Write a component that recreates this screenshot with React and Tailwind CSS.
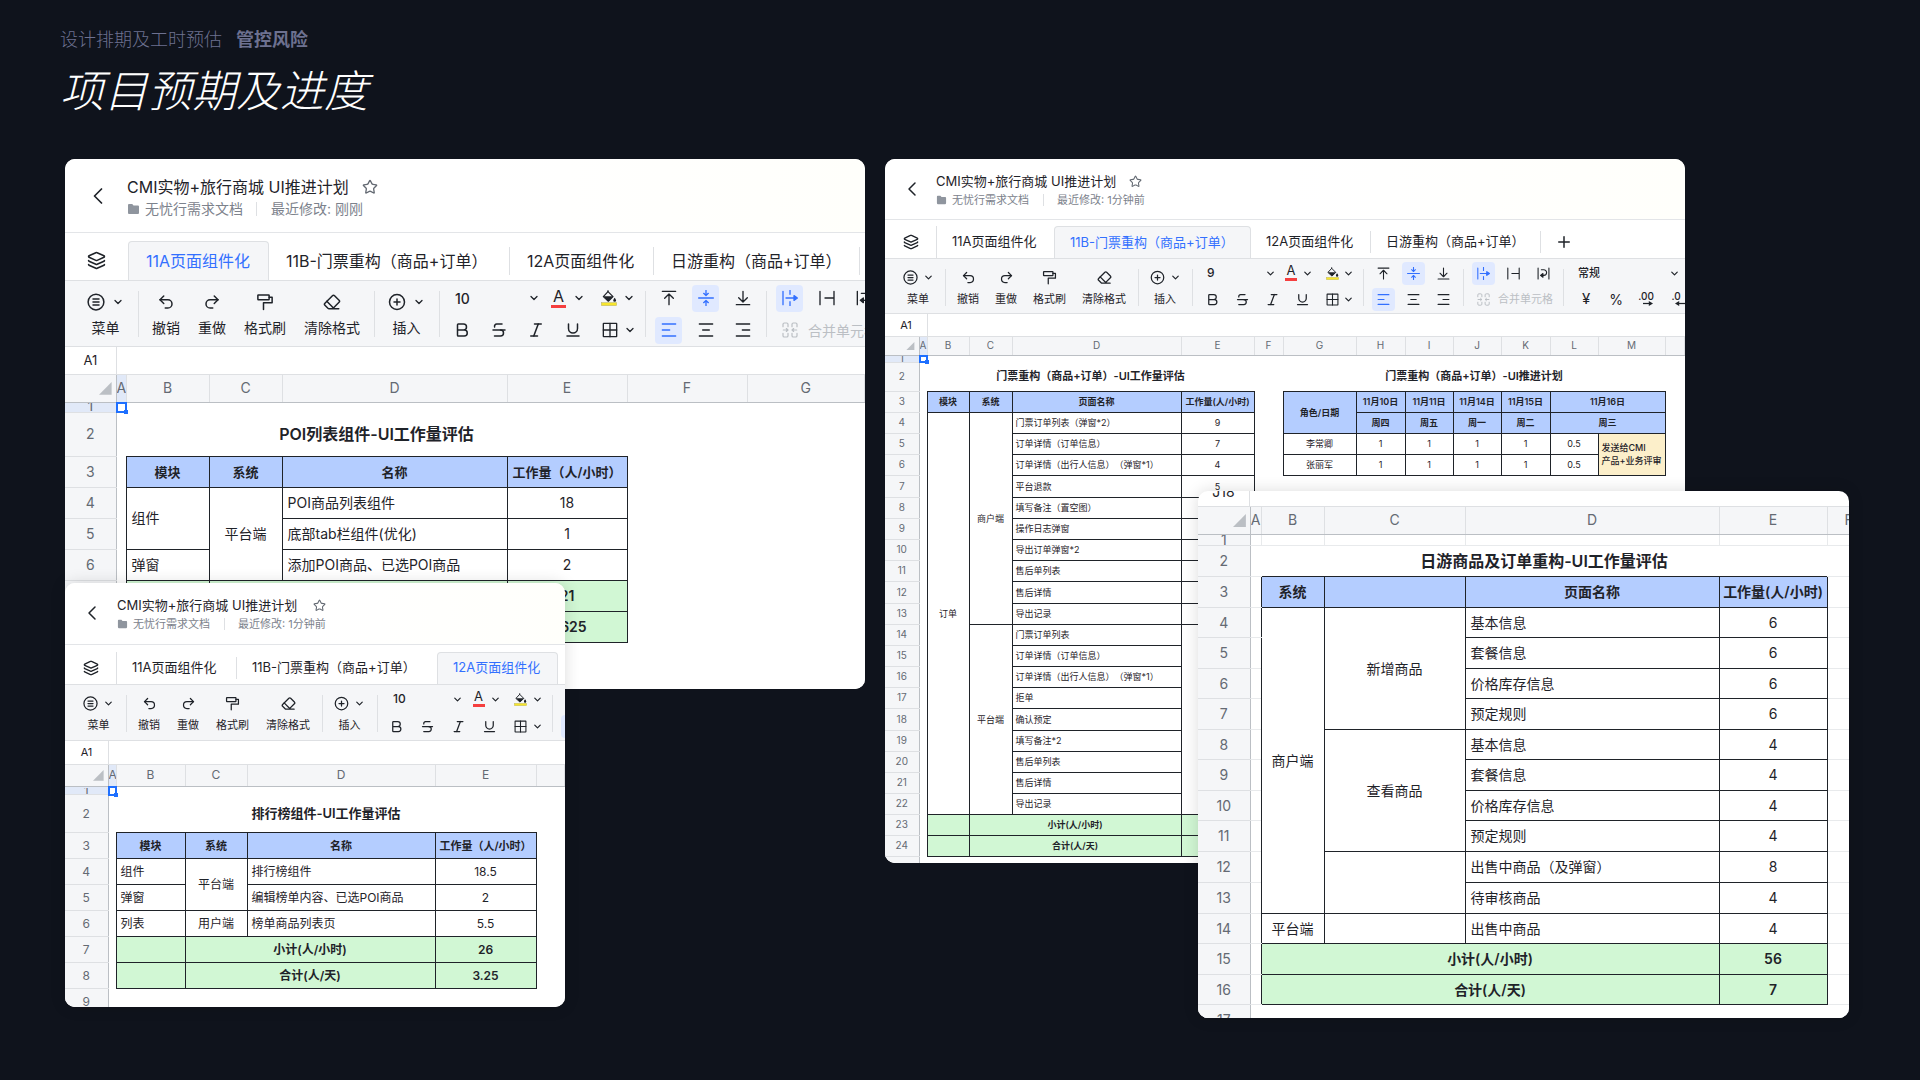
import React from "react";
import {
  Bold,
  ChevronDown,
  ChevronLeft,
  CirclePlus,
  Eraser,
  Italic,
  Layers,
  Plus,
  Redo2,
  Star,
  Strikethrough,
  Underline,
  Undo2,
} from "lucide-react";

/* ---------- icons ---------- */

function Svg({ className, children, width = 2 }) {
  return (
    <svg
      viewBox="0 0 24 24"
      className={className}
      fill="none"
      stroke="currentColor"
      strokeWidth={width}
      strokeLinecap="round"
      strokeLinejoin="round"
      aria-hidden="true"
    >
      {children}
    </svg>
  );
}

const MenuIcon = ({ className }) => (
  <Svg className={className}>
    <circle cx="12" cy="12" r="10.5" />
    <path d="M8 8h8M8 12h8M8 16h8" />
  </Svg>
);
const RollerIcon = ({ className }) => (
  <Svg className={className}>
    <rect x="2.5" y="2.5" width="15" height="6.5" rx="0.6" />
    <path d="M17.5 5.5h4v7.5H10v9" />
  </Svg>
);
const FolderIcon = ({ className }) => (
  <svg viewBox="0 0 24 24" className={className} fill="currentColor" aria-hidden="true">
    <path d="M1 4a2 2 0 0 1 2-2h6.500l2.500 3H21a2 2 0 0 1 2 2v13a2 2 0 0 1-2 2H3a2 2 0 0 1-2-2z" />
  </svg>
);
const BucketIcon = ({ className }) => (
  <svg viewBox="0 0 24 24" className={className} aria-hidden="true">
    <path d="M10.500 0.500v3" stroke="#1f2329" strokeWidth="1.800" fill="none" />
    <path d="M10.500 2.500 18 10l-7 6.800L3.500 10z" fill="none" stroke="#1f2329" strokeWidth="1.800" strokeLinejoin="round" />
    <path d="M3.500 9.500h15l-7.500 7.300z" fill="#1f2329" />
    <path d="M20.500 11.500s2.200 2.700 2.200 4.100a2.200 2.200 0 0 1-4.400 0c0-1.400 2.200-4.100 2.200-4.100z" fill="#1f2329" />
    <rect x="0.500" y="19" width="23" height="4.500" fill="#f7e52b" stroke="#b9b46a" strokeWidth="0.800" />
  </svg>
);
const BordersIcon = ({ className }) => (
  <Svg className={className}>
    <rect x="2" y="2" width="20" height="20" rx="0.500" />
    <path d="M12 2v20M2 12h20" />
  </Svg>
);
const TopIcon = ({ className }) => (
  <Svg className={className}>
    <path d="M2 2h20M12 22V7M5.500 12.500 12 6l6.500 6.500" />
  </Svg>
);
const MiddleIcon = ({ className }) => (
  <Svg className={className}>
    <path d="M1 12h22M12 0.500v7M8.500 5 12 8.300 15.500 5M12 23.500v-7M8.500 19l3.500-3.300 3.500 3.300" />
  </Svg>
);
const BottomIcon = ({ className }) => (
  <Svg className={className}>
    <path d="M2 22h20M12 2v15M5.500 11.500 12 18l6.500-6.500" />
  </Svg>
);
const LeftIcon = ({ className }) => (
  <Svg className={className}>
    <path d="M2 3h20M2 12h11M2 21h20" />
  </Svg>
);
const CenterIcon = ({ className }) => (
  <Svg className={className}>
    <path d="M2 3h20M7 12h10M2 21h20" />
  </Svg>
);
const RightIcon = ({ className }) => (
  <Svg className={className}>
    <path d="M2 3h20M11 12h11M2 21h20" />
  </Svg>
);
const OverflowIcon = ({ className }) => (
  <Svg className={className}>
    <path d="M1.500 2v20M12 0.500v6M12 17.500v6M6 12h13" />
    <path d="m18 8.500 5 3.500-5 3.500z" fill="currentColor" />
  </Svg>
);
const ClipIcon = ({ className }) => (
  <Svg className={className}>
    <path d="M1.500 2v20M22.500 2v20M9 12h13" />
  </Svg>
);
const WrapIcon = ({ className }) => (
  <Svg className={className}>
    <path d="M2 2v20M22 2v20M8 5h4.500a5 5 0 0 1 0 10.500H10" />
    <path d="m11 12-4.500 3.500L11 19z" fill="currentColor" />
  </Svg>
);
const MergeIcon = ({ className }) => (
  <Svg className={className} width={1.800}>
    <path d="M1.500 7V3.500a2 2 0 0 1 2-2H7a2 2 0 0 1 2 2V7M1.500 17v3.500a2 2 0 0 0 2 2H7a2 2 0 0 0 2-2V17" />
    <path d="M15 7V3.500a2 2 0 0 1 2-2h3.500a2 2 0 0 1 2 2V7M15 17v3.500a2 2 0 0 0 2 2h3.500a2 2 0 0 0 2-2V17" />
    <path d="M2 12h6.500M6.500 9.800 9 12l-2.500 2.200M22 12h-6.500M17.500 9.800 15 12l2.500 2.200" />
  </Svg>
);
const ArrowRight = ({ className }) => (
  <svg viewBox="0 0 12 6" className={className} aria-hidden="true">
    <path d="M0 3h8" stroke="currentColor" strokeWidth="1.500" />
    <path d="m7 0 5 3-5 3z" fill="currentColor" />
  </svg>
);
const ArrowLeft = ({ className }) => (
  <svg viewBox="0 0 12 6" className={className} aria-hidden="true">
    <path d="M4 3h8" stroke="currentColor" strokeWidth="1.500" />
    <path d="M5 0 0 3l5 3z" fill="currentColor" />
  </svg>
);

/* ---------- sizes of the three editor chromes ---------- */

const LARGE = {
  header: "h-[74px]",
  back: "w-[62px] pl-1",
  backIcon: "size-[28px]",
  title: "text-[16px] leading-6 gap-[13px]",
  star: "size-4",
  sub: "text-[14px] leading-5",
  folder: "w-[13px] h-3 mr-[5px]",
  subRule: "h-[14px] ml-[13px] mr-[14px]",
  tabs: "h-12",
  lead: "w-[63px]",
  layers: "size-[19px]",
  tabText: "text-[16px] pl-[17px]",
  tabHeight: "h-[39px]",
  tabRule: "h-7",
  bar: "h-[66px]",
  rule: "h-[46px] mt-[10px]",
  menu: "w-[73px] pl-2",
  insert: "w-[65px]",
  group: "gap-[18px] px-[14px]",
  item: "pt-3 gap-[7px] text-[14px] leading-5",
  icon: "size-[18px]",
  chev: "size-3",
  itemChev: "gap-[7px]",
  stack: "pt-px",
  row: "h-8",
  fontPad: "pl-1 pr-[9px]",
  cell: "w-[37px]",
  select: "w-[97px] pl-3 text-[14px]",
  selectChev: "right-0",
  letter: "w-[50px]",
  a: "text-[16px] leading-[14px] w-[15px]",
  aBar: "h-[3px]",
  alignPad: "px-[5px]",
  hi: "size-[27px]",
  alignIcon: "size-4",
  mergeText: "text-[14px]",
  name: "h-7 text-[13px]",
  nameBox: "w-[52px]",
};

const SMALL = {
  header: "h-[61px]",
  back: "w-[51px] pl-[2px]",
  backIcon: "size-[24px]",
  title: "text-[13px] leading-5 gap-[13px]",
  star: "size-[13px]",
  sub: "text-[11px] leading-[18px]",
  folder: "w-[11px] h-[10px] mr-[5px]",
  subRule: "h-3 ml-[14px] mr-[13px]",
  tabs: "h-[39px]",
  lead: "w-[51px]",
  layers: "size-4",
  tabText: "text-[13px] pl-[15px]",
  tabHeight: "h-8",
  tabRule: "h-[22px]",
  bar: "h-[55px]",
  rule: "h-[37px] mt-[10px]",
  menu: "w-[60px] pl-[6px]",
  insert: "w-[54px]",
  group: "gap-4 px-3",
  item: "pt-[11px] gap-[6px] text-[11px] leading-4",
  icon: "size-[15px]",
  chev: "size-[11px]",
  itemChev: "gap-[5px]",
  stack: "pt-px",
  row: "h-[26px]",
  fontPad: "pl-[5px] pr-[9px]",
  cell: "w-[30px]",
  select: "w-[79px] pl-[10px] text-[12px]",
  selectChev: "right-0",
  letter: "w-[41px]",
  a: "text-[13px] leading-[11px] w-3",
  aBar: "h-[3px]",
  alignPad: "px-[5px]",
  hi: "size-[23px]",
  alignIcon: "size-[13px]",
  mergeText: "text-[11px]",
  name: "h-[23px] text-[11px]",
  nameBox: "w-[43px]",
};

const MEDIUM = {
  ...SMALL,
  header: "h-[62px]",
  back: "w-[52px] pl-[2px]",
  title: "text-[13px] leading-5 gap-4",
  tabs: "h-10",
  bar: "h-[56px]",
  menu: "w-[61px] pl-[6px]",
  insert: "w-[55px]",
  group: "gap-[17px] px-3",
  row: "h-[27px]",
  fontPad: "pl-1 pr-[9px]",
  cell: "w-[31px]",
  select: "w-[82px] pl-3 text-[12px]",
  letter: "w-[42px]",
  name: "h-6 text-[11px]",
  nameBox: "w-[44px]",
};

/* ---------- editor chrome ---------- */

function DocHeader({ s, edited }) {
  return (
    <header className={`flex items-center border-b border-[#e3e5e8] bg-linear-to-r from-white via-white to-[#fffffb] ${s.header}`}>
      <button aria-label="返回" className={`flex shrink-0 justify-center ${s.back}`}>
        <ChevronLeft className={s.backIcon} strokeWidth={1.5} />
      </button>
      <div className="pt-[2px]">
        <div className={`flex items-center whitespace-nowrap ${s.title}`}>
          <h2>CMI实物+旅行商城 UI推进计划</h2>
          <button aria-label="收藏" className="text-[#646a73]">
            <Star className={s.star} strokeWidth={2} />
          </button>
        </div>
        <div className={`flex items-center whitespace-nowrap text-[#7c828c] ${s.sub}`}>
          <FolderIcon className={`text-[#8f959e] ${s.folder}`} />
          <a href="#folder">无忧行需求文档</a>
          <span className={`w-px bg-[#dee0e3] ${s.subRule}`} />
          <span>最近修改: {edited}</span>
        </div>
      </div>
    </header>
  );
}

function Tabs({ s, tabs, add }) {
  const active = tabs.findIndex((t) => t.active);
  return (
    <div className={`flex items-end border-b border-[#dee0e3] bg-white ${s.tabs}`}>
      <button aria-label="工作表列表" className={`flex shrink-0 items-center justify-center ${s.lead} ${s.tabHeight}`}>
        <Layers className={s.layers} strokeWidth={2} />
      </button>
      <div role="tablist" className={`flex ${active === 0 ? "" : "border-l border-[#dee0e3]"}`}>
        {tabs.map((t, i) => (
          <button
            key={t.label}
            role="tab"
            aria-selected={!!t.active}
            className={`flex shrink-0 items-center justify-between whitespace-nowrap ${s.tabHeight} ${s.tabText} ${t.width} ${
              t.active ? "-mb-px rounded-t-[4px] border border-b-0 border-[#dee0e3] bg-[#f5f6f8] text-[#3370ff]" : ""
            }`}
          >
            {t.label}
            {!t.active && i + 1 !== active && <span className={`w-px bg-[#dee0e3] ${s.tabRule}`} />}
          </button>
        ))}
      </div>
      {add && (
        <button aria-label="新建工作表" className={`flex w-[46px] shrink-0 items-center justify-center ${s.tabHeight}`}>
          <Plus className="size-[18px]" strokeWidth={2} />
        </button>
      )}
    </div>
  );
}

const Rule = ({ s }) => <span className={`-mr-px w-px shrink-0 bg-[#dee0e3] ${s.rule}`} />;
const Chev = ({ s, className = "" }) => <ChevronDown className={`shrink-0 ${s.chev} ${className}`} strokeWidth={2.6} />;

function Item({ s, icon: Icon, label, stroke }) {
  return (
    <button className={`flex shrink-0 flex-col items-center whitespace-nowrap ${s.item}`}>
      <Icon className={s.icon} strokeWidth={stroke} />
      {label}
    </button>
  );
}

function DropItem({ s, icon: Icon, label, width }) {
  return (
    <button className={`flex shrink-0 flex-col items-center whitespace-nowrap ${s.item} ${width}`}>
      <span className={`flex items-center ${s.itemChev}`}>
        <Icon className={s.icon} strokeWidth={2} />
        <Chev s={s} />
      </span>
      {label}
    </button>
  );
}

function IconCell({ s, icon: Icon, label, on, size }) {
  return (
    <span className={`flex shrink-0 justify-center ${s.cell}`}>
      <button
        aria-label={label}
        aria-pressed={!!on}
        className={`flex items-center justify-center rounded-[4px] ${s.hi} ${on ? "bg-[#e0e9ff] text-[#3370ff]" : ""}`}
      >
        <Icon className={size || s.alignIcon} strokeWidth={2} />
      </button>
    </span>
  );
}

function Toolbar({ s, fontSize, numberFormat }) {
  return (
    <div role="toolbar" aria-label="格式" className={`flex overflow-hidden border-b border-[#dee0e3] bg-[#f5f6f8] ${s.bar}`}>
      <DropItem s={s} icon={MenuIcon} label="菜单" width={s.menu} />
      <Rule s={s} />
      <div className={`flex ${s.group}`}>
        <Item s={s} icon={Undo2} label="撤销" stroke={2} />
        <Item s={s} icon={Redo2} label="重做" stroke={2} />
        <Item s={s} icon={RollerIcon} label="格式刷" />
        <Item s={s} icon={Eraser} label="清除格式" stroke={2} />
      </div>
      <Rule s={s} />
      <DropItem s={s} icon={CirclePlus} label="插入" width={s.insert} />
      <Rule s={s} />
      <div className={`shrink-0 ${s.stack} ${s.fontPad}`}>
        <div className={`flex items-center ${s.row}`}>
          <span className="relative flex items-center">
            <select aria-label="字号" defaultValue={fontSize} className={`appearance-none bg-transparent font-medium ${s.select}`}>
              <option>{fontSize}</option>
            </select>
            <Chev s={s} className={`pointer-events-none absolute ${s.selectChev}`} />
          </span>
          <span className={`flex items-center ${s.letter}`}>
            <button aria-label="字体颜色" className={`flex shrink-0 justify-center ${s.cell}`}>
              <span className={`flex flex-col items-center gap-[2px] ${s.a}`}>
                A
                <span className={`w-full bg-[#f53f3f] ${s.aBar}`} />
              </span>
            </button>
            <Chev s={s} className="-ml-1" />
          </span>
          <IconCell s={s} icon={BucketIcon} label="填充颜色" />
          <Chev s={s} className="-ml-1" />
        </div>
        <div className={`flex items-center ${s.row}`}>
          <IconCell s={s} icon={Bold} label="加粗" size={s.icon} />
          <IconCell s={s} icon={Strikethrough} label="删除线" size={s.icon} />
          <IconCell s={s} icon={Italic} label="斜体" size={s.icon} />
          <IconCell s={s} icon={Underline} label="下划线" size={s.icon} />
          <IconCell s={s} icon={BordersIcon} label="边框" />
          <Chev s={s} className="-ml-1" />
        </div>
      </div>
      <Rule s={s} />
      <div className={`shrink-0 ${s.stack} ${s.alignPad}`}>
        <div className={`flex items-center ${s.row}`}>
          <IconCell s={s} icon={TopIcon} label="顶端对齐" />
          <IconCell s={s} icon={MiddleIcon} label="垂直居中" on />
          <IconCell s={s} icon={BottomIcon} label="底端对齐" />
        </div>
        <div className={`flex items-center ${s.row}`}>
          <IconCell s={s} icon={LeftIcon} label="左对齐" on />
          <IconCell s={s} icon={CenterIcon} label="水平居中" />
          <IconCell s={s} icon={RightIcon} label="右对齐" />
        </div>
      </div>
      <Rule s={s} />
      <div className={`shrink-0 ${s.stack} ${s.alignPad}`}>
        <div className={`flex items-center ${s.row}`}>
          <IconCell s={s} icon={OverflowIcon} label="溢出" on />
          <IconCell s={s} icon={ClipIcon} label="截断" />
          <IconCell s={s} icon={WrapIcon} label="自动换行" />
        </div>
        <button disabled className={`flex items-center whitespace-nowrap text-[#bbbfc4] ${s.row} ${s.mergeText}`}>
          <span className={`flex shrink-0 justify-center ${s.cell}`}>
            <MergeIcon className={s.alignIcon} />
          </span>
          合并单元格
        </button>
      </div>
      {numberFormat && (
        <>
          <Rule s={s} />
          <div className={`shrink-0 pl-2 ${s.stack}`}>
            <div className={`relative flex items-center ${s.row}`}>
              <select aria-label="数字格式" className="w-[112px] appearance-none bg-transparent pl-[7px] text-[11px] font-medium">
                <option>常规</option>
              </select>
              <Chev s={s} className="pointer-events-none absolute left-[98px]" />
            </div>
            <div className={`flex items-center ${s.row}`}>
              <button aria-label="货币" className={`text-[15px] ${s.cell}`}>¥</button>
              <button aria-label="百分比" className={`text-[14px] ${s.cell}`}>%</button>
              <button aria-label="增加小数位" className={`flex flex-col items-center text-[10px] leading-[9px] font-medium ${s.cell}`}>
                .00
                <ArrowRight className="ml-[3px] h-[5px] w-[10px]" />
              </button>
              <button aria-label="减少小数位" className={`flex flex-col items-center text-[10px] leading-[9px] font-medium ${s.cell}`}>
                .0
                <ArrowLeft className="ml-[8px] h-[5px] w-[10px]" />
              </button>
            </div>
          </div>
        </>
      )}
    </div>
  );
}

function NameBar({ s, value }) {
  return (
    <div className={`flex border-b border-[#dee0e3] bg-white ${s.name}`}>
      <input aria-label="名称框" defaultValue={value} className={`shrink-0 border-r border-[#dee0e3] text-center outline-none ${s.nameBox}`} />
      <input aria-label="编辑栏" className="min-w-0 flex-1 outline-none" />
    </div>
  );
}

/* ---------- sheet ---------- */

const KIND = {
  title: "font-semibold text-center",
  head: "border border-[#1f2329] bg-[#b4cdff] font-semibold text-center",
  left: "border border-[#1f2329] bg-white text-left",
  mid: "border border-[#1f2329] bg-white text-center",
  sum: "border border-[#1f2329] bg-[#d1f7d4] font-semibold text-center",
  note: "border border-[#1f2329] bg-[#fcefca] text-left font-medium",
  gap: "",
  grid: "border border-[#e8eaec]",
  side: "border-y border-[#e8eaec]",
};

function Sheet({ cols, letters, headHeight, rows, text, num, pad, titleText, headText = "", rowOne, selected }) {
  const extra = { left: pad, note: pad, title: titleText, head: headText };
  return (
    <table className={`w-full table-fixed border-collapse bg-white ${text}`}>
      <colgroup>
        {cols.map((c, i) => (
          <col key={i} className={c} />
        ))}
      </colgroup>
      <thead>
        <tr className={`bg-[#f5f6f8] text-[#646a73] ${headHeight} ${num}`}>
          <th className="border-r border-b border-[#bbbfc4] p-0">
            <svg viewBox="0 0 10 10" className="mr-1 ml-auto w-[25%]" aria-hidden="true">
              <path d="M10 0v10H0z" fill="#bbbfc4" />
            </svg>
          </th>
          {letters.map((l, i) => (
            <th
              key={i}
              scope="col"
              className={`overflow-hidden border-r border-b border-r-[#dee0e3] border-b-[#bbbfc4] p-0 font-normal ${selected && i === 0 ? "bg-[#e1e9f8]" : ""}`}
            >
              {l}
            </th>
          ))}
        </tr>
      </thead>
      <tbody>
        {rows.map((r, ri) => (
          <tr key={ri} className={r.h}>
            <th
              scope="row"
              className={`border-r border-b border-r-[#bbbfc4] border-b-[#dee0e3] p-0 font-normal text-[#646a73] ${num} ${
                selected && ri === 0 ? "bg-[#e1e9f8]" : "bg-[#f5f6f8]"
              }`}
            >
              {ri === 0 ? <div className={`flex items-center justify-center overflow-hidden ${rowOne}`}>{ri + 1}</div> : ri + 1}
            </th>
            {r.cells.map(([kind, value, cs, rs], ci) => (
              <td
                key={ci}
                colSpan={cs}
                rowSpan={rs}
                className={`whitespace-pre p-0 ${KIND[kind]} ${extra[kind] || ""} ${selected && ri === 0 && ci === 0 ? "relative" : ""}`}
              >
                {value}
                {selected && ri === 0 && ci === 0 && (
                  <span className="absolute -inset-px z-10 border-2 border-[#1e6fff]">
                    <span className="absolute -right-[3px] -bottom-[3px] size-1 bg-[#1e6fff]" />
                  </span>
                )}
              </td>
            ))}
          </tr>
        ))}
      </tbody>
    </table>
  );
}

/* ---------- sheet contents ---------- */

const gap = (n = 1, rs) => ["gap", "", n, rs];

const poiRows = [
  { h: "h-[10px]", cells: [gap(), gap(6)] },
  { h: "h-[44px]", cells: [gap(), ["title", "POI列表组件-UI工作量评估", 4], gap(2)] },
  { h: "h-[31px]", cells: [gap(), ["head", "模块"], ["head", "系统"], ["head", "名称"], ["head", "工作量（人/小时）"], gap(2)] },
  { h: "h-[31px]", cells: [gap(), ["left", "组件", 1, 2], ["mid", "平台端", 1, 3], ["left", "POI商品列表组件"], ["mid", "18"], gap(2)] },
  { h: "h-[31px]", cells: [gap(), ["left", "底部tab栏组件(优化)"], ["mid", "1"], gap(2)] },
  { h: "h-[31px]", cells: [gap(), ["left", "弹窗"], ["left", "添加POI商品、已选POI商品"], ["mid", "2"], gap(2)] },
  { h: "h-[31px]", cells: [gap(), ["sum", ""], ["sum", "小计(人/小时)", 2], ["sum", "21"], gap(2)] },
  { h: "h-[31px]", cells: [gap(), ["sum", ""], ["sum", "合计(人/天)", 2], ["sum", "2.625"], gap(2)] },
  { h: "h-[46px]", cells: [gap(), gap(6)] },
];

const rankRows = [
  { h: "h-2", cells: [gap(), gap(5)] },
  { h: "h-[38px]", cells: [gap(), ["title", "排行榜组件-UI工作量评估", 4], gap()] },
  { h: "h-[26px]", cells: [gap(), ["head", "模块"], ["head", "系统"], ["head", "名称"], ["head", "工作量（人/小时）"], gap()] },
  { h: "h-[26px]", cells: [gap(), ["left", "组件"], ["mid", "平台端", 1, 2], ["left", "排行榜组件"], ["mid", "18.5"], gap()] },
  { h: "h-[26px]", cells: [gap(), ["left", "弹窗"], ["left", "编辑榜单内容、已选POI商品"], ["mid", "2"], gap()] },
  { h: "h-[26px]", cells: [gap(), ["left", "列表"], ["mid", "用户端"], ["left", "榜单商品列表页"], ["mid", "5.5"], gap()] },
  { h: "h-[26px]", cells: [gap(), ["sum", ""], ["sum", "小计(人/小时)", 2], ["sum", "26"], gap()] },
  { h: "h-[26px]", cells: [gap(), ["sum", ""], ["sum", "合计(人/天)", 2], ["sum", "3.25"], gap()] },
  { h: "h-[26px]", cells: [gap(), gap(5)] },
];

const A = "h-[21px]";
const B = "h-[22px]";
const page = (h, name, hours) => ({ h, cells: [gap(), ["left", name], ...(hours === undefined ? [] : [["mid", hours]]), gap(9)] });

const ticketRows = [
  { h: "h-[7px]", cells: [gap(), gap(13)] },
  { h: "h-[29px]", cells: [gap(), ["title", "门票重构（商品+订单）-UI工作量评估", 4], gap(), ["title", "门票重构（商品+订单）-UI推进计划", 7], gap()] },
  {
    h: A,
    cells: [
      gap(), ["head", "模块"], ["head", "系统"], ["head", "页面名称"], ["head", "工作量(人/小时)"], gap(),
      ["head", "角色/日期", 1, 2], ["head", "11月10日"], ["head", "11月11日"], ["head", "11月14日"], ["head", "11月15日"], ["head", "11月16日", 2], gap(),
    ],
  },
  {
    h: A,
    cells: [
      gap(), ["mid", "订单", 1, 19], ["mid", "商户端", 1, 10], ["left", "门票订单列表（弹窗*2）"], ["mid", "9"], gap(),
      ["head", "周四"], ["head", "周五"], ["head", "周一"], ["head", "周二"], ["head", "周三", 2], gap(),
    ],
  },
  {
    h: A,
    cells: [
      gap(), ["left", "订单详情（订单信息）"], ["mid", "7"], gap(),
      ["mid", "李常卿"], ["mid", "1"], ["mid", "1"], ["mid", "1"], ["mid", "1"], ["mid", "0.5"], ["note", "发送给CMI\n产品+业务评审", 1, 2], gap(),
    ],
  },
  {
    h: A,
    cells: [
      gap(), ["left", "订单详情（出行人信息）（弹窗*1）"], ["mid", "4"], gap(),
      ["mid", "张丽军"], ["mid", "1"], ["mid", "1"], ["mid", "1"], ["mid", "1"], ["mid", "0.5"], gap(),
    ],
  },
  page(B, "平台退款", "5"),
  page(A, "填写备注（置空图）", ""),
  page(A, "操作日志弹窗", ""),
  page(A, "导出订单弹窗*2", ""),
  page(A, "售后单列表", ""),
  page(B, "售后详情", ""),
  page(A, "导出记录", ""),
  { h: A, cells: [gap(), ["mid", "平台端", 1, 9], ["left", "门票订单列表"], ["mid", "", 1, 9], gap(9)] },
  page(A, "订单详情（订单信息）"),
  page(A, "订单详情（出行人信息）（弹窗*1）"),
  page(A, "拒单"),
  page(B, "确认预定"),
  page(A, "填写备注*2"),
  page(A, "售后单列表"),
  page(A, "售后详情"),
  page(A, "导出记录"),
  { h: A, cells: [gap(), ["sum", ""], ["sum", "小计(人/小时)", 2], ["sum", ""], gap(9)] },
  { h: A, cells: [gap(), ["sum", ""], ["sum", "合计(人/天)", 2], ["sum", ""], gap(9)] },
  { h: "h-[29px]", cells: [gap(), gap(13)] },
];

const O = "h-[31px]";
const E = "h-[30px]";
const g = ["grid", ""];
const s = ["side", ""];

const dayRows = [
  { h: "h-[11px]", cells: [g, g, g, g, g, g] },
  { h: O, cells: [s, ["title", "日游商品及订单重构-UI工作量评估", 4], s] },
  { h: O, cells: [s, ["head", "系统"], ["head", ""], ["head", "页面名称"], ["head", "工作量(人/小时)"], s] },
  { h: E, cells: [s, ["mid", "商户端", 1, 10], ["mid", "新增商品", 1, 4], ["left", "基本信息"], ["mid", "6"], s] },
  { h: O, cells: [s, ["left", "套餐信息"], ["mid", "6"], s] },
  { h: E, cells: [s, ["left", "价格库存信息"], ["mid", "6"], s] },
  { h: O, cells: [s, ["left", "预定规则"], ["mid", "6"], s] },
  { h: E, cells: [s, ["mid", "查看商品", 1, 4], ["left", "基本信息"], ["mid", "4"], s] },
  { h: O, cells: [s, ["left", "套餐信息"], ["mid", "4"], s] },
  { h: E, cells: [s, ["left", "价格库存信息"], ["mid", "4"], s] },
  { h: O, cells: [s, ["left", "预定规则"], ["mid", "4"], s] },
  { h: O, cells: [s, ["mid", "", 1, 2], ["left", "出售中商品（及弹窗）"], ["mid", "8"], s] },
  { h: O, cells: [s, ["left", "待审核商品"], ["mid", "4"], s] },
  { h: E, cells: [s, ["mid", "平台端"], ["mid", ""], ["left", "出售中商品"], ["mid", "4"], s] },
  { h: O, cells: [s, ["sum", "小计(人/小时)", 3], ["sum", "56"], s] },
  { h: E, cells: [s, ["sum", "合计(人/天)", 3], ["sum", "7"], s] },
  { h: O, cells: [s, s, s, s, s, s] },
];

/* ---------- page ---------- */

const CARD = "overflow-hidden rounded-[10px] bg-white";

export default function App() {
  return (
    <div className="min-h-screen bg-[#0f131c] font-['Inter','Noto_Sans_CJK_SC',sans-serif] text-[#1f2329] [text-spacing-trim:space-all]">
      <div className="pt-[26px] pl-[60px] font-['Noto_Sans_CJK_SC',sans-serif]">
        <p className="flex gap-[14px] text-[18px] leading-6 font-light text-[#6d7190]">
          <span>设计排期及工时预估</span>
          <strong className="font-bold">管控风险</strong>
        </p>
        <h1 className="mt-2 text-[44px] leading-[60px] font-light text-white italic">项目预期及进度</h1>
      </div>

      <main className="mt-[41px] grid grid-cols-2 items-start gap-5 pr-[235px] pl-[65px]">
        <div>
          <section className={CARD}>
            <DocHeader s={LARGE} edited="刚刚" />
            <Tabs
              s={LARGE}
              tabs={[
                { label: "11A页面组件化", width: "w-[141px]", active: true },
                { label: "11B-门票重构（商品+订单）", width: "w-[241px]" },
                { label: "12A页面组件化", width: "w-[144px]" },
                { label: "日游重构（商品+订单）", width: "w-[206px]" },
              ]}
            />
            <Toolbar s={LARGE} fontSize="10" />
            <NameBar s={LARGE} value="A1" />
            <Sheet
              cols={["w-[51px]", "w-[10px]", "w-[83px]", "w-[73px]", "w-[225px]", "w-[120px]", "w-[120px]", ""]}
              letters={["A", "B", "C", "D", "E", "F", "G"]}
              headHeight="h-[27px]"
              rows={poiRows}
              text="text-[14px] leading-[18px]"
              num="text-[14px]"
              pad="pl-[5px]"
              titleText="text-[16px]"
              headText="text-[13px]"
              rowOne="h-2"
              selected
            />
          </section>

          <section className={`relative z-10 -mt-[106px] w-5/8 shadow-[0_0_16px_rgba(0,0,0,0.14)] ${CARD}`}>
            <DocHeader s={MEDIUM} edited="1分钟前" />
            <Tabs
              s={MEDIUM}
              tabs={[
                { label: "11A页面组件化", width: "w-[120px]" },
                { label: "11B-门票重构（商品+订单）", width: "w-[200px]" },
                { label: "12A页面组件化", width: "w-[121px]", active: true },
              ]}
            />
            <Toolbar s={MEDIUM} fontSize="10" />
            <NameBar s={MEDIUM} value="A1" />
            <div className="-mb-2">
              <Sheet
                cols={["w-[43px]", "w-2", "w-[69px]", "w-[62px]", "w-[188px]", "w-[101px]", ""]}
                letters={["A", "B", "C", "D", "E", ""]}
                headHeight="h-[22px]"
                rows={rankRows}
                text="text-[12px] leading-4"
                num="text-[12px]"
                pad="pl-1"
                titleText="text-[13px]"
                headText="text-[11px]"
                rowOne="h-[6px]"
                selected
              />
            </div>
          </section>
        </div>

        <div>
          <section className={CARD}>
            <DocHeader s={SMALL} edited="1分钟前" />
            <Tabs
              s={SMALL}
              add
              tabs={[
                { label: "11A页面组件化", width: "w-[117px]" },
                { label: "11B-门票重构（商品+订单）", width: "w-[197px]", active: true },
                { label: "12A页面组件化", width: "w-[120px]" },
                { label: "日游重构（商品+订单）", width: "w-[170px]" },
              ]}
            />
            <Toolbar s={SMALL} fontSize="9" numberFormat />
            <NameBar s={SMALL} value="A1" />
            <div className="-mb-[23px]">
              <Sheet
                cols={[
                  "w-[34px]", "w-2", "w-[42px]", "w-[43px]", "w-[169px]", "w-[73px]", "w-[29px]", "w-[73px]",
                  "w-[49px]", "w-[48px]", "w-[48px]", "w-[49px]", "w-[48px]", "w-[67px]", "",
                ]}
                letters={["A", "B", "C", "D", "E", "F", "G", "H", "I", "J", "K", "L", "M", ""]}
                headHeight="h-[18px]"
                rows={ticketRows}
                text="text-[9px] leading-[13px]"
                num="text-[10px]"
                pad="pl-[3px]"
                titleText="text-[11px]"
                rowOne="h-[6px]"
                selected
              />
            </div>
          </section>

          <section className={`relative z-10 -mt-[372px] ml-[313px] w-[651px] shadow-[0_0_16px_rgba(0,0,0,0.14)] ${CARD}`}>
            <div className="-mt-[14px] -mr-[22px] -mb-[18px]">
              <div className="flex h-[30px] border-b border-[#dee0e3] text-[14px]">
                <input aria-label="名称框" defaultValue="J18" className="w-[52px] border-r border-[#dee0e3] text-center outline-none" />
              </div>
              <Sheet
                cols={["w-[52px]", "w-[11px]", "w-[63px]", "w-[141px]", "w-[254px]", "w-[108px]", ""]}
                letters={["A", "B", "C", "D", "E", "F"]}
                headHeight="h-7"
                rows={dayRows}
                text="text-[14px] leading-[18px]"
                num="text-[14px]"
                pad="pl-[5px]"
                titleText="text-[16px]"
                rowOne="h-[10px]"
              />
            </div>
          </section>
        </div>
      </main>
    </div>
  );
}
